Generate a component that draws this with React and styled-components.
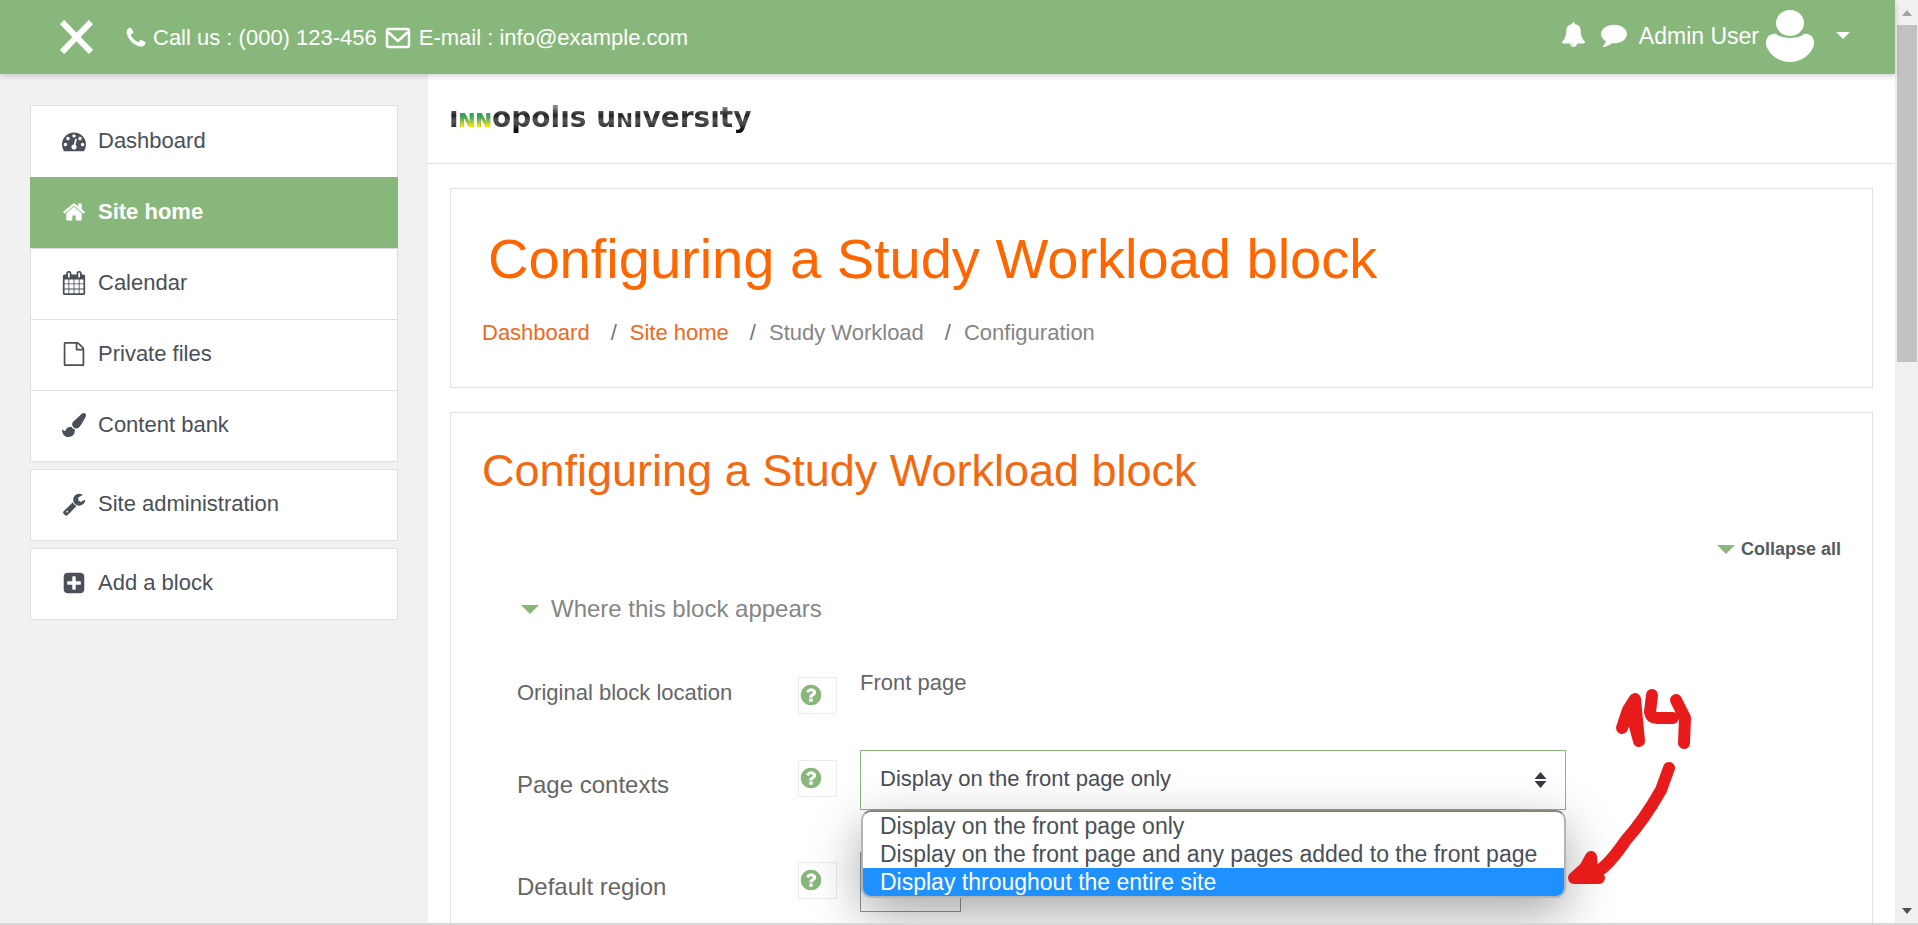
import React from 'react';
import styled, { createGlobalStyle, css } from 'styled-components';

const GlobalStyle = createGlobalStyle`
  *, *::before, *::after { box-sizing: border-box; }
  body {
    margin: 0;
    color: #555;
    background: #fff;
    font: 22px/32px "Liberation Sans", Arial, sans-serif;
  }
  button, select { font: inherit; color: inherit; }
  a { color: inherit; text-decoration: none; }
  h1, h2, h3, ul, ol, dl, dd { margin: 0; padding: 0; font-weight: 400; }
  ul, ol { list-style: none; }
`;

const GREEN = '#88b77b';
const LINE = '#dee0e0';

const PATHS = {
  phone:
    'M1600 1240q0 27-10 70.5t-21 68.5q-21 50-122 106-94 51-186 51-27 0-53-3.5t-57.5-12.5-47-14.5-55.5-20.5-49-18q-98-35-175-83-127-79-264-216t-216-264q-48-77-83-175-3-9-18-49t-20.5-55.5-14.5-47-12.5-57.5-3.5-53q0-92 51-186 56-101 106-122 25-11 68.5-21t70.5-10q14 0 21 3 18 6 53 76 11 19 30 54t35 63.5 31 53.5q3 4 17.5 25t21.5 35.5 7 28.5q0 20-28.5 50t-62 55-62 53-28.5 46q0 9 5 22.5t8.5 20.5 14 24 11.5 19q76 137 174 235t235 174q2 1 19 11.5t24 14 20.5 8.5 22.5 5q18 0 46-28.5t53-62 55-62 50-28.5q14 0 28.5 7t35.5 21.5 25 17.5q25 15 53.5 31t63.5 35 54 30q70 35 76 53 3 7 3 21z',
  bell:
    'M912 1696q0-16-16-16-59 0-101.5-42.5t-42.5-101.5q0-16-16-16t-16 16q0 73 51.5 124.5t124.5 51.5q16 0 16-16zm816-288q0 52-38 90t-90 38h-448q0 106-75 181t-181 75-181-75-75-181h-448q-52 0-90-38t-38-90q50-42 91-88t85-119.5 74.5-158.5 50-206 19.5-260q0-152 117-282.5t307-158.5q-8-19-8-39 0-40 28-68t68-28 68 28 28 68q0 20-8 39 190 28 307 158.5t117 282.5q0 139 19.5 260t50 206 74.5 158.5 85 119.5 91 88z',
  comment:
    'M1792 896q0 174-120 321.5t-326 233-450 85.5q-70 0-145-8-198 175-460 242-49 14-114 22-17 2-30.5-9t-17.5-29v-1q-3-4-.5-12t2-10 4.5-9.5l6-9 7-8.5 8-9q7-8 31-34.5t34.5-38 31-39.5 32.5-51 27-59 26-76q-157-89-247.5-220t-90.5-281q0-130 71-248.5t191-204.5 286-136.5 348-50.5q244 0 450 85.5t326 233 120 321.5z',
  gauge:
    'M384 1152q0-53-37.5-90.5t-90.5-37.5-90.5 37.5-37.5 90.5 37.5 90.5 90.5 37.5 90.5-37.5 37.5-90.5zm192-448q0-53-37.5-90.5t-90.5-37.5-90.5 37.5-37.5 90.5 37.5 90.5 90.5 37.5 90.5-37.5 37.5-90.5zm428 481l101-382q6-26-7.5-48.5t-38.5-29.5-48 6.5-30 39.5l-101 382q-60 5-107 43.5t-63 98.5q-20 77 20 146t117 89 146-20 89-117q16-60-6-117t-72-91zm660-33q0-53-37.5-90.5t-90.5-37.5-90.5 37.5-37.5 90.5 37.5 90.5 90.5 37.5 90.5-37.5 37.5-90.5zm-640-640q0-53-37.5-90.5t-90.5-37.5-90.5 37.5-37.5 90.5 37.5 90.5 90.5 37.5 90.5-37.5 37.5-90.5zm448 192q0-53-37.5-90.5t-90.5-37.5-90.5 37.5-37.5 90.5 37.5 90.5 90.5 37.5 90.5-37.5 37.5-90.5zm320 448q0 261-141 483-19 29-54 29h-1402q-35 0-54-29-141-221-141-483 0-182 71-348t191-286 286-191 348-71 348 71 286 191 191 286 71 348z',
  home:
    'M1472 992v480q0 26-19 45t-45 19h-384v-384h-256v384h-384q-26 0-45-19t-19-45v-480q0-1 .5-3t.5-3l575-474 575 474q1 2 1 6zm223-69l-62 74q-8 9-21 11h-3q-13 0-21-7l-692-577-692 577q-12 8-24 7-13-2-21-11l-62-74q-8-10-7-23.5t11-21.5l719-599q32-26 76-26t76 26l244 204v-195q0-14 9-23t23-9h192q14 0 23 9t9 23v408l219 182q10 8 11 21.5t-7 23.5z',
  calendar:
    'M192 1664h288v-288h-288v288zm352 0h320v-288h-320v288zm-352-352h288v-320h-288v320zm352 0h320v-320h-320v320zm-352-384h288v-288h-288v288zm736 736h320v-288h-320v288zm-384-736h320v-288h-320v288zm768 736h288v-288h-288v288zm-384-352h320v-320h-320v320zm-352-864v-288q0-13-9.5-22.5t-22.5-9.5h-64q-13 0-22.5 9.5t-9.5 22.5v288q0 13 9.5 22.5t22.5 9.5h64q13 0 22.5-9.5t9.5-22.5zm736 864h288v-320h-288v320zm-384-384h320v-288h-320v288zm384 0h288v-288h-288v288zm32-480v-288q0-13-9.5-22.5t-22.5-9.5h-64q-13 0-22.5 9.5t-9.5 22.5v288q0 13 9.5 22.5t22.5 9.5h64q13 0 22.5-9.5t9.5-22.5zm384-64v1280q0 52-38 90t-90 38h-1408q-52 0-90-38t-38-90v-1280q0-52 38-90t90-38h128v-96q0-66 47-113t113-47h64q66 0 113 47t47 113v96h384v-96q0-66 47-113t113-47h64q66 0 113 47t47 113v96h128q52 0 90 38t38 90z',
  file:
    'M1596 380q28 28 48 76t20 88v1152q0 40-28 68t-68 28h-1344q-40 0-68-28t-28-68v-1600q0-40 28-68t68-28h896q40 0 88 20t76 48zm-444-244v376h376q-10-29-22-41l-313-313q-12-12-41-22zm384 1528v-1024h-416q-40 0-68-28t-28-68v-416h-768v1536h1280z',
  brush:
    'M1615 0q70 0 122.5 46.5t52.5 116.5q0 63-45 151-332 629-465 752-97 91-218 91-126 0-216.5-92.5t-90.5-219.5q0-128 92-212l638-579q59-54 130-54zm-909 1034q39 76 106.5 130t150.5 76l1 71q4 213-129.5 347t-348.5 134q-123 0-218-46.5t-152.5-127.5-86.5-183-29-220q7 5 41 30t62 44.5 59 36.5 46 17q41 0 55-37 25-66 57.5-112.5t69.5-76 88-47.5 103-25.5 125-10.5z',
  wrench:
    'M448 1472q0-26-19-45t-45-19-45 19-19 45 19 45 45 19 45-19 19-45zm644-420l-682 682q-37 37-90 37-52 0-91-37l-106-108q-38-36-38-90 0-53 38-91l681-681q39 98 114.5 173.5t173.5 114.5zm634-435q0 39-23 106-47 134-164.5 217.5t-258.5 83.5q-185 0-316.5-131.5t-131.5-316.5 131.5-316.5 316.5-131.5q58 0 121.5 16.5t107.5 46.5q16 11 16 28t-16 28l-293 169v224l193 107q5-3 79-48.5t135.5-81 70.5-35.5q15 0 23.5 10t8.5 25z',
  plus:
    'M1408 960v-128q0-26-19-45t-45-19h-320v-320q0-26-19-45t-45-19h-128q-26 0-45 19t-19 45v320h-320q-26 0-45 19t-19 45v128q0 26 19 45t45 19h320v320q0 26 19 45t45 19h128q26 0 45-19t19-45v-320h320q26 0 45-19t19-45zm256-544v960q0 119-84.5 203.5t-203.5 84.5h-960q-119 0-203.5-84.5t-84.5-203.5v-960q0-119 84.5-203.5t203.5-84.5h960q119 0 203.5 84.5t84.5 203.5z',
  help:
    'M1024 1376v-192q0-14-9-23t-23-9h-192q-14 0-23 9t-9 23v192q0 14 9 23t23 9h192q14 0 23-9t9-23zm256-672q0-88-55.5-163t-138.5-116-170-41q-243 0-371 213-15 24 8 42l132 100q7 6 19 6 16 0 25-12 53-68 86-92 34-24 86-24 48 0 85.5 26t37.5 59q0 38-20 61t-68 45q-63 28-115.5 86.5t-52.5 125.5v36q0 14 9 23t23 9h192q14 0 23-9t9-23q0-19 21.5-49.5t54.5-49.5q32-18 49-28.5t46-35 44.5-48 28-60.5 12.5-81zm384 192q0 209-103 385.5t-279.5 279.5-385.5 103-385.5-103-279.5-279.5-103-385.5 103-385.5 279.5-279.5 385.5-103 385.5 103 279.5 279.5 103 385.5z',
};

const Glyph = styled.svg`
  display: block;
  flex: none;
  width: ${(p) => p.$size || 24}px;
  height: ${(p) => p.$size || 24}px;
  fill: currentColor;
`;

function Icon({ name, size }) {
  return (
    <Glyph viewBox="0 0 1792 1792" $size={size} aria-hidden="true">
      <path d={PATHS[name]} />
    </Glyph>
  );
}

const Shell = styled.div`
  display: flex;
  height: 100vh;
  overflow: hidden;
  border-bottom: 2px solid #d7d7d7;
`;

const Page = styled.div`
  position: relative;
  flex: 1;
  min-width: 0;
  display: flex;
  flex-direction: column;
`;

const TopBar = styled.header`
  position: relative;
  z-index: 2;
  flex: none;
  display: flex;
  align-items: center;
  height: 74px;
  padding: 0 44px 0 60px;
  color: #fff;
  background: ${GREEN};
  box-shadow: 0 2px 6px rgba(0, 0, 0, 0.18);
`;

const BarButton = styled.button`
  display: flex;
  align-items: center;
  padding: 0;
  border: 0;
  color: inherit;
  background: none;
  cursor: pointer;
`;

const Contact = styled.address`
  display: flex;
  align-items: center;
  gap: 5px;
  margin: 2px auto 0 31px;
  font-style: normal;
  white-space: nowrap;
`;

const Envelope = styled.svg`
  width: 26px;
  height: 22px;
  margin: 0 3px;
  fill: none;
  stroke: #fff;
  stroke-width: 2.500;
`;

const UserTools = styled.div`
  display: flex;
  align-items: center;
  gap: 12px;
  padding-bottom: 6px;
`;

const BellButton = styled(BarButton)`
  margin-right: 3px;
`;

const UserMenu = styled(BarButton)`
  gap: 6px;
  padding-top: 4px;
  font-size: 23px;
  & > svg:last-child { margin-left: 14px; }
`;

const Body = styled.div`
  flex: 1;
  min-height: 0;
  display: flex;
`;

const Sidebar = styled.nav`
  flex: none;
  width: 428px;
  padding: 31px 30px;
  background: #f1f1f1;
`;

const NavGroup = styled.ul`
  display: grid;
  grid-auto-rows: 1fr;
  min-height: ${(p) => p.$height}px;
  margin-bottom: 7px;
  border: 1px solid ${LINE};
  background: #fff;
`;

const NavItem = styled.li`
  display: flex;
  & + & { border-top: 1px solid ${LINE}; }
  ${(p) =>
    p.$active &&
    css`
      margin: 0 -1px;
      && { border-color: ${GREEN}; }
      color: #fff;
      font-weight: 700;
      background: ${GREEN};
      padding: 0 1px;
    `}
`;

const NavLink = styled.a`
  flex: 1;
  display: flex;
  align-items: center;
  gap: 12px;
  padding: 0 0 2px 31px;
  color: ${(p) => (p.$active ? '#fff' : '#495057')};
`;

const Main = styled.main`
  flex: 1;
  min-width: 0;
  background: #fff;
`;

const Brand = styled.div`
  display: flex;
  height: 90px;
  padding: 25px 21px;
  border-bottom: 1px solid ${LINE};
`;

const Wordmark = styled.a`
  font: 700 28px/38px "DejaVu Sans", sans-serif;
  color: transparent;
  background: linear-gradient(180deg, #888 20%, #222 42%, #555 55%, #444 65%, #111 78%);
  background-clip: text;
`;

const SmallCap = styled.span`
  font-size: 20px;
  ${(p) =>
    p.$accent &&
    css`
      background: linear-gradient(180deg, #35a650 35%, #8cc63f 55%, #ffe600 75%);
      background-clip: text;
    `}
`;

const Panels = styled.div`
  display: grid;
  gap: 24px;
  padding: 24px 22px;
`;

const Panel = styled.section`
  padding: ${(p) => p.$pad};
  border: 1px solid ${LINE};
`;

const PageTitle = styled.h1`
  padding-left: 6px;
  font-size: 56px;
  line-height: 68px;
  color: #ff6600;
`;

const Crumbs = styled.ol`
  display: flex;
  margin-top: 24px;
  color: #868686;
`;

const Crumb = styled.li`
  & + &::before {
    content: "/";
    padding: 0 13px 0 21px;
    color: #6c757d;
  }
  a { color: #f0681c; }
`;

const BlockTitle = styled.h2`
  font-size: 45px;
  line-height: 54px;
  color: #f4690f;
`;

const CollapseRow = styled.div`
  display: flex;
  justify-content: flex-end;
  margin-top: 39px;
  font-size: 18px;
  line-height: 24px;
`;

const Toggle = styled.button`
  display: flex;
  align-items: center;
  gap: ${(p) => p.$gap}px;
  padding: 0;
  border: 0;
  background: none;
  font-weight: ${(p) => (p.$bold ? 700 : 400)};
  color: ${(p) => (p.$bold ? '#555b60' : '#868686')};
  &::before {
    content: "";
    border: 9px solid transparent;
    border-top-color: ${GREEN};
    border-bottom: 0;
  }
`;

const Legend = styled.h3`
  display: flex;
  margin: 32px 0 0 39px;
  font-size: 24px;
`;

const Fields = styled.div`
  margin: 42px 31px 0 35px;
`;

const Field = styled.div`
  display: grid;
  grid-template-columns: 281px 39px 1fr;
  align-items: start;
  min-height: ${(p) => p.$height}px;
`;

const FieldLabel = styled.label`
  padding-top: ${(p) => p.$top}px;
  font-size: ${(p) => p.$size}px;
  color: #666;
`;

const Help = styled.button`
  display: flex;
  align-items: center;
  height: 37px;
  margin-top: 10px;
  padding: 0 0 2px;
  border: 1px solid #ececec;
  color: ${GREEN};
  background: #fff;
`;

const Value = styled.div`
  padding-left: 23px;
  color: #666;
`;

const Picker = styled.div`
  position: relative;
  width: ${(p) => p.$width};
`;

const Select = styled.select`
  display: block;
  appearance: none;
  width: 100%;
  height: 60px;
  padding: 0 19px 2px;
  border: 1px solid ${(p) => (p.$focus ? GREEN : '#8f959e')};
  border-radius: 0;
  color: #495057;
  background: #fff;
`;

const Arrows = styled.svg`
  position: absolute;
  top: 22px;
  right: 19px;
  width: 13px;
  height: 16px;
  pointer-events: none;
`;

const Menu = styled.ul`
  position: absolute;
  z-index: 3;
  top: 100%;
  left: 1px;
  right: 0;
  overflow: hidden;
  border: 2px solid #b4b4b4;
  border-top-color: #7d8a78;
  border-radius: 10px;
  color: #495057;
  background: #fff;
  font-size: 23px;
  line-height: 28px;
  box-shadow: 0 16px 50px rgba(0, 0, 0, 0.34);
`;

const Option = styled.li`
  padding: 0 17px;
  white-space: nowrap;
  ${(p) =>
    p.$active &&
    css`
      color: #fff;
      background: #1e90ff;
    `}
`;

const Ink = styled.svg`
  position: absolute;
  z-index: 4;
  left: 1565px;
  top: 684px;
  width: 130px;
  height: 206px;
  fill: none;
  stroke: #e81b1b;
  stroke-width: 12;
  stroke-linecap: round;
  stroke-linejoin: round;
`;

const ScrollTrack = styled.div`
  flex: none;
  width: 23px;
  display: flex;
  flex-direction: column;
  padding: 0 1px 0 2px;
  background: #f0f0f0;
`;

const ScrollArrow = styled.div`
  display: grid;
  place-items: center;
  height: 25px;
  margin-top: ${(p) => (p.$down ? 'auto' : 0)};
  &::before {
    content: "";
    border: 5px solid transparent;
    ${(p) =>
      p.$down
        ? css`border-top: 6px solid #505050; border-bottom: 0;`
        : css`border-bottom: 6px solid #a3a3a3; border-top: 0;`}
  }
`;

const ScrollThumb = styled.div`
  height: 36.5%;
  background: #c1c1c1;
`;

const NAV = [
  {
    height: 357,
    items: [
      ['gauge', 'Dashboard'],
      ['home', 'Site home', true],
      ['calendar', 'Calendar'],
      ['file', 'Private files'],
      ['brush', 'Content bank'],
    ],
  },
  { height: 72, items: [['wrench', 'Site administration']] },
  { height: 72, items: [['plus', 'Add a block']] },
];

const CONTEXTS = [
  'Display on the front page only',
  'Display on the front page and any pages added to the front page',
  'Display throughout the entire site',
];

function HelpButton({ topic }) {
  return (
    <Help type="button" aria-label={`Help with ${topic}`}>
      <Icon name="help" size={24} />
    </Help>
  );
}

function Header() {
  return (
    <TopBar>
      <BarButton type="button" aria-label="Close side panel">
        <svg width="33" height="34" viewBox="0 0 33 34" stroke="#fff" strokeWidth="6">
          <path d="M2 2l29 30M31 2L2 32" />
        </svg>
      </BarButton>
      <Contact>
        <Icon name="phone" size={24} />
        <span>Call us : (000) 123-456</span>
        <Envelope viewBox="0 0 26 22" aria-hidden="true">
          <rect x="2" y="2" width="22" height="18" rx="2" />
          <path d="M3 5l10 9L23 5" />
        </Envelope>
        <a href="mailto:info@example.com">E-mail : info@example.com</a>
      </Contact>
      <UserTools>
        <BellButton type="button" aria-label="Notifications"><Icon name="bell" size={25} /></BellButton>
        <BarButton type="button" aria-label="Messages"><Icon name="comment" size={26} /></BarButton>
        <UserMenu type="button">
          <span>Admin User</span>
          <svg width="50" height="54" viewBox="0 0 50 54" fill="#fff">
            <ellipse cx="25" cy="14" rx="14" ry="13" />
            <path d="M11 25C5 24 0 29 1 36c3 10 13 17 24 17s21-7 24-17c1-7-4-12-10-11-4 3-9 4-14 4s-10-1-14-4z" />
          </svg>
          <svg width="16" height="8" viewBox="0 0 16 8" fill="#fff"><path d="M1 0h14L8 7z" /></svg>
        </UserMenu>
      </UserTools>
    </TopBar>
  );
}

export default function App() {
  return (
    <>
      <GlobalStyle />
      <Shell>
        <Page>
          <Header />
          <Body>
            <Sidebar aria-label="Site">
              {NAV.map((group) => (
                <NavGroup key={group.items[0][1]} $height={group.height}>
                  {group.items.map(([icon, label, active]) => (
                    <NavItem key={label} $active={active}>
                      <NavLink href="#" $active={active}>
                        <Icon name={icon} />
                        {label}
                      </NavLink>
                    </NavItem>
                  ))}
                </NavGroup>
              ))}
            </Sidebar>
            <Main>
              <Brand>
                <Wordmark href="#">
                  ı<SmallCap $accent>NN</SmallCap>opolıs u<SmallCap>N</SmallCap>ıversıty
                </Wordmark>
              </Brand>
              <Panels>
                <Panel $pad="36px 31px 38px">
                  <PageTitle>Configuring a Study Workload block</PageTitle>
                  <Crumbs>
                    <Crumb><a href="#">Dashboard</a></Crumb>
                    <Crumb><a href="#">Site home</a></Crumb>
                    <Crumb>Study Workload</Crumb>
                    <Crumb>Configuration</Crumb>
                  </Crumbs>
                </Panel>
                <Panel $pad="31px 31px">
                  <BlockTitle>Configuring a Study Workload block</BlockTitle>
                  <CollapseRow>
                    <Toggle type="button" $gap={6} $bold>Collapse all</Toggle>
                  </CollapseRow>
                  <Legend>
                    <Toggle type="button" $gap={12}>Where this block appears</Toggle>
                  </Legend>
                  <Fields>
                    <Field $height={83}>
                      <FieldLabel as="div" $top={10} $size={22}>Original block location</FieldLabel>
                      <HelpButton topic="Original block location" />
                      <Value>Front page</Value>
                    </Field>
                    <Field $height={102}>
                      <FieldLabel htmlFor="contexts" $top={19} $size={24}>Page contexts</FieldLabel>
                      <HelpButton topic="Page contexts" />
                      <Value>
                        <Picker $width="706px">
                          <Select id="contexts" $focus defaultValue={CONTEXTS[0]}>
                            {CONTEXTS.map((c) => <option key={c}>{c}</option>)}
                          </Select>
                          <Arrows viewBox="0 0 13 16" fill="#343a40">
                            <path d="M6.500 0l6 7H.5zM6.500 16l6-7H.5z" />
                          </Arrows>
                          <Menu role="listbox" aria-label="Page contexts">
                            {CONTEXTS.map((c, i) => (
                              <Option key={c} role="option" aria-selected={i === 2} $active={i === 2}>{c}</Option>
                            ))}
                          </Menu>
                        </Picker>
                      </Value>
                    </Field>
                    <Field $height={102}>
                      <FieldLabel htmlFor="region" $top={19} $size={24}>Default region</FieldLabel>
                      <HelpButton topic="Default region" />
                      <Value>
                        <Picker $width="101px">
                          <Select id="region" />
                        </Picker>
                      </Value>
                    </Field>
                  </Fields>
                </Panel>
              </Panels>
            </Main>
          </Body>
          <Ink viewBox="1565 684 130 206" aria-hidden="true">
            <path d="M1622 728L1628 710L1635 699L1639 741L1631 712" />
            <path d="M1652 695L1650 712Q1651 718 1657 718L1673 718M1676 700L1685 718L1684 743" />
            <path d="M1669 768L1661 790Q1644 820 1626 840Q1611 862 1600 870" />
            <path fill="#e81b1b" d="M1591 857L1585 868L1574 878L1599 878L1592 868Z" />
          </Ink>
        </Page>
        <ScrollTrack aria-hidden="true">
          <ScrollArrow />
          <ScrollThumb />
          <ScrollArrow $down />
        </ScrollTrack>
      </Shell>
    </>
  );
}
